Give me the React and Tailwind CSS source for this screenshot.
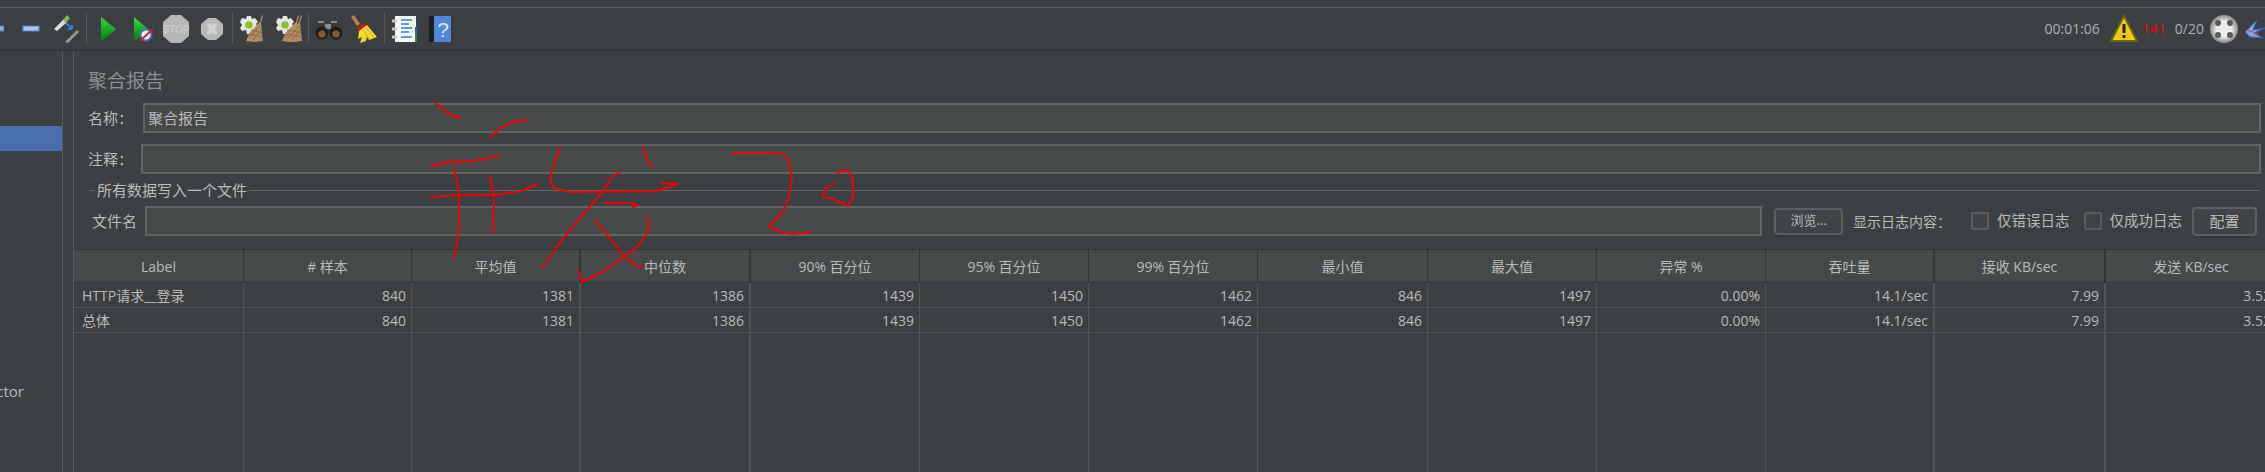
import React from "react";

const strokes = [
  "M435 103L442 108L449 114L460 118",
  "M490 137L502 127L513 122L528 120",
  "M432 166L446 162L473 161L499 156",
  "M454 169L459 190L459 230L454 258",
  "M490 177L494 197L493 233",
  "M431 197L460 195L495 195L522 191L538 184",
  "M560 147L551 173L550 181L554 188L570 192L657 191L678 184L662 183",
  "M643 147L647 160L652 167",
  "M620 172L613 176L600 195L580 218L558 245L542 268",
  "M604 203L630 203L638 205L633 207",
  "M595 221L610 238L623 255L635 265L643 267",
  "M647 218L649 222L648 232L637 247L617 262L600 273L582 282L578 270",
  "M732 153L780 153L788 158L792 177L789 197L783 212L769 226L780 232L793 234L811 232",
  "M837 174L842 170L849 171L853 180L853 197L848 206L833 199L823 197L825 189L835 183",
];

const columns = [
  { w: "w-[170px]", title: "Label", a: "HTTP请求__登录", b: "总体", left: true },
  { w: "w-[168px]", title: "# 样本", a: "840", b: "840" },
  { w: "w-[169px]", title: "平均值", a: "1381", b: "1381", thick: true },
  { w: "w-[170px]", title: "中位数", a: "1386", b: "1386", thick: true },
  { w: "w-[169px]", title: "90% 百分位", a: "1439", b: "1439" },
  { w: "w-[169px]", title: "95% 百分位", a: "1450", b: "1450" },
  { w: "w-[169px]", title: "99% 百分位", a: "1462", b: "1462" },
  { w: "w-[170px]", title: "最小值", a: "846", b: "846" },
  { w: "w-[169px]", title: "最大值", a: "1497", b: "1497" },
  { w: "w-[169px]", title: "异常 %", a: "0.00%", b: "0.00%" },
  { w: "w-[169px]", title: "吞吐量", a: "14.1/sec", b: "14.1/sec", thick: true },
  { w: "w-[171px]", title: "接收 KB/sec", a: "7.99", b: "7.99", thick: true },
  { w: "w-[171px]", title: "发送 KB/sec", a: "3.52", b: "3.52" },
];

function Sep({ className }) {
  return <div className={"w-[1px] h-[31px] shrink-0 bg-[#55585a] " + className} />;
}

function Icon({ w, ml, children }) {
  return (
    <svg width={w} height={30} viewBox={`0 0 ${w} 30`} className={"shrink-0 " + ml}>
      {children}
    </svg>
  );
}

function Gear() {
  return (
    <g>
      <path d="M9 2L13 2L14 5L17 4L20 8L18 10L20 13L17 17L14 16L13 20L9 20L8 16L4 17L2 14L4 11L2 8L4 4L8 5Z" fill="#e6e6e6" />
      <circle cx="11" cy="11" r="3.8" fill="#8fc31f" />
    </g>
  );
}

function Brush({ x = 0 }) {
  return (
    <g transform={`translate(${x} 0)`}>
      <path d="M8 27L12 18L22 8L24 1L25 2L23 9L25 27L16 28Z" fill="#b28d63" />
      <path d="M11 24L22 12M15 26L24 15M11 20L24 23M13 16L24 19" stroke="#8a6a45" strokeWidth="1" />
    </g>
  );
}

function Toolbar() {
  return (
    <div className="h-[43px] flex items-center border-b-2 border-[#343638] shrink-0">
      <Icon w={4} ml="">
        <rect x="-6" y="12" width="10" height="5" fill="#8db4e2" stroke="#4f7fc0" />
      </Icon>
      <Icon w={18} ml="ml-[18px]">
        <rect x="1" y="12" width="16" height="5" fill="#a9c6ea" stroke="#4f83c6" />
      </Icon>
      <Icon w={28} ml="ml-[12px]">
        <path d="M2 15L12 5L15 8L5 17Z" fill="#ddd" />
        <path d="M11 6L15 1L18 4L14 9Z" fill="#8cb15a" />
        <path d="M14 9L20 15M20 15L20 11M20 15L16 15" stroke="#2e7fdc" strokeWidth="2" fill="none" />
        <path d="M13 28L25 16L27 18L16 29Z" fill="#8f9a8a" />
      </Icon>
      <Sep className="ml-[6px]" />
      <Icon w={16} ml="ml-[14px]">
        <defs>
          <linearGradient id="gr" x1="0" y1="0" x2="0" y2="1">
            <stop offset="0" stopColor="#38d838" />
            <stop offset="1" stopColor="#007a10" />
          </linearGradient>
        </defs>
        <path d="M0 3L15 15L0 28Z" fill="url(#gr)" />
      </Icon>
      <Icon w={20} ml="ml-[16px]">
        <path d="M1 3L15 15L1 28Z" fill="url(#gr)" />
        <circle cx="13" cy="21" r="5.5" fill="#f0f0f0" stroke="#3a70b8" strokeWidth="2" />
        <path d="M7 27L20 15" stroke="#d0202a" strokeWidth="2" />
      </Icon>
      <Icon w={28} ml="ml-[9px]">
        <path d="M9 1L19 1L27 8L27 22L19 29L9 29L1 22L1 8Z" fill="#b7b7b7" />
        <text x="14" y="19" textAnchor="middle" fontSize="10" fontWeight="700" fill="#cbcbcb" fontFamily="Liberation Sans, sans-serif">STOP</text>
      </Icon>
      <Icon w={22} ml="ml-[11px]">
        <path d="M7 4L15 4L22 10L22 20L15 26L7 26L0 20L0 10Z" fill="#b9b9b9" />
        <path d="M7 10L15 20M15 10L7 20" stroke="#d2d2d2" strokeWidth="4" />
      </Icon>
      <Sep className="ml-[9px]" />
      <Icon w={27} ml="ml-[5px]">
        <Gear />
        <Brush />
      </Icon>
      <Icon w={28} ml="ml-[9px]">
        <Gear />
        <Brush />
        <Brush x={3} />
      </Icon>
      <Sep className="ml-[6px]" />
      <Icon w={30} ml="ml-[4px]">
        <rect x="4" y="7" width="9" height="9" rx="2" fill="#3a3a3a" />
        <rect x="17" y="7" width="9" height="9" rx="2" fill="#3a3a3a" />
        <path d="M5 8H11M18 8H24" stroke="#a8a8a8" strokeWidth="1.5" />
        <rect x="12" y="10" width="6" height="5" fill="#8a8a8a" />
        <circle cx="9" cy="19" r="6.5" fill="#1e1e1e" />
        <circle cx="23" cy="19" r="6.5" fill="#1e1e1e" />
        <circle cx="9" cy="20" r="3.6" fill="#8a5a30" />
        <circle cx="23" cy="20" r="3.6" fill="#8a5a30" />
      </Icon>
      <Icon w={28} ml="ml-[7px]">
        <path d="M1 3L4 1L10 10L7 12Z" fill="#b8863a" />
        <path d="M7 14L15 9L17 11L9 17Z" fill="#d01818" />
        <path d="M9 17L17 11L27 23L19 26L17 23L16 27L10 29L12 23L8 25Z" fill="#f3d92b" />
        <path d="M13 16L19 25M16 14L24 23" stroke="#c9a916" strokeWidth="1" />
      </Icon>
      <Sep className="ml-[6px]" />
      <Icon w={25} ml="ml-[7px]">
        <rect x="3" y="2" width="21" height="26" fill="#f8f8f8" />
        <rect x="23" y="13" width="2" height="8" fill="#2a6bc0" />
        <rect x="23" y="21" width="2" height="7" fill="#2b8a2b" />
        <path d="M0 7H5M0 15H5M0 23H5" stroke="#ccc" strokeWidth="3" />
        <path d="M9 6H20M9 10H17M9 14H20M9 18H17M9 23H20" stroke="#2f7be0" strokeWidth="1.5" />
      </Icon>
      <Icon w={22} ml="ml-[12px]">
        <rect x="0" y="2" width="6" height="26" fill="#1d2023" />
        <rect x="5" y="2" width="17" height="26" fill="#4f86d8" />
        <text x="14" y="23" textAnchor="middle" fontSize="21" fill="#dbe7f8" fontFamily="Liberation Sans, sans-serif">?</text>
      </Icon>
      <span className="ml-auto text-[14px] text-[#a9b4bf]">00:01:06</span>
      <Icon w={28} ml="ml-[10px]">
        <path d="M14 2L27 27L1 27Z" fill="#f2cc0c" stroke="#6e6518" strokeWidth="2" />
        <rect x="12.5" y="10" width="3" height="9" fill="#222" />
        <rect x="12.5" y="21" width="3" height="3" fill="#222" />
      </Icon>
      <span className="ml-[4px] text-[14px] text-[#f00000]">141</span>
      <span className="ml-[9px] text-[14px] text-[#a9b4bf]">0/20</span>
      <Icon w={28} ml="ml-[6px]">
        <defs>
          <radialGradient id="ball">
            <stop offset="0.55" stopColor="#ececec" />
            <stop offset="1" stopColor="#8a8a8a" />
          </radialGradient>
        </defs>
        <circle cx="14" cy="15" r="14" fill="url(#ball)" />
        <circle cx="8" cy="9" r="3" fill="#5a5a5a" />
        <circle cx="20" cy="9" r="3" fill="#5a5a5a" />
        <circle cx="8" cy="21" r="3" fill="#5a5a5a" />
        <circle cx="20" cy="21" r="3" fill="#5a5a5a" />
      </Icon>
      <Icon w={20} ml="ml-[7px]">
        <path d="M0 18L12 6L8 16L20 14L9 19L18 24L5 23Z" fill="#7fa3de" stroke="#2f5fb0" strokeWidth="1" />
        <path d="M2 16L14 20" stroke="#d04040" strokeWidth="1" />
      </Icon>
    </div>
  );
}

function Field({ className }) {
  return <div className={"h-[30px] min-w-0 border-2 border-[#646464] bg-[#45494a] " + (className || "")} />;
}

function Checkbox({ label, ml }) {
  return (
    <div className={"flex items-center shrink-0 " + ml}>
      <div className="w-[18px] h-[18px] rounded-[3px] border-2 border-[#5a5d5f] bg-[#3f4244]" />
      <span className="ml-[8px] text-[14.5px]">{label}</span>
    </div>
  );
}

function Button({ label, className }) {
  return (
    <div className={"shrink-0 flex items-center justify-center rounded-[4px] border-2 border-[#5c5f61] bg-[#404345] shadow-[0_2px_0_#35383a] " + className}>
      {label}
    </div>
  );
}

function Column({ w, title, a, b, left, thick }) {
  const cell = "h-[25px] px-[5px] flex items-center border-b border-[#505355] " + (left ? "pl-[8px]" : "justify-end");
  return (
    <div className={"shrink-0 flex flex-col border-[#505355] " + w + " " + (thick ? "border-r-2" : "border-r")}>
      <div
        className={
          "relative h-[34px] flex items-center justify-center bg-[#45494a] border-t border-b border-[#323436] " +
          (thick ? "-mr-[2px] border-r-2" : "-mr-[1px] border-r")
        }
      >
        {title}
      </div>
      <div className={cell}>{a}</div>
      <div className={cell}>{b}</div>
    </div>
  );
}

export default function App() {
  return (
    <div
      className="relative w-[2265px] h-[472px] overflow-hidden bg-[#3c3f41] text-[#bbbbbb] text-[14px] flex flex-col"
      style={{ fontFamily: '"Open Sans","Noto Sans CJK SC",sans-serif' }}
    >
      <div className="h-[8px] shrink-0 border-b border-[#58595b]" />
      <Toolbar />
      <div className="flex flex-1 min-h-0">
        <div className="w-[63px] shrink-0 border-r border-[#58595b] flex flex-col">
          <div className="mt-[75px] h-[25px] bg-[#4b6eaf]" />
          <div className="mt-[228px] w-[24px] h-[24px] overflow-hidden flex justify-end items-center whitespace-nowrap text-[15px]">Inspector</div>
        </div>
        <div className="w-[11px] shrink-0 border-r border-[#58595b]" />
        <div className="flex-1 min-w-0 flex flex-col">
          <div className="ml-[14px] mt-[17px] h-[26px] flex items-center text-[19px] text-[#8c9092]">聚合报告</div>
          <div className="mt-[9px] ml-[14px] mr-[4px] flex items-center text-[15px]">
            <span className="w-[55px] shrink-0">名称：</span>
            <div className="flex-1 h-[30px] min-w-0 border-2 border-[#646464] bg-[#45494a] px-[3px] flex items-center">聚合报告</div>
          </div>
          <div className="mt-[11px] ml-[14px] mr-[4px] flex items-center text-[15px]">
            <span className="w-[53px] shrink-0">注释：</span>
            <Field className="flex-1" />
          </div>
          <div className="mt-[6px] ml-[15px] mr-[5px] h-[20px] flex items-center text-[15px]">
            <div className="w-[6px] h-[1px] bg-[#646464]" />
            <span className="mx-[2px] shrink-0">所有数据写入一个文件</span>
            <div className="flex-1 h-[1px] bg-[#646464]" />
          </div>
          <div className="mt-[6px] ml-[18px] mr-[8px] flex items-center text-[15px] whitespace-nowrap">
            <span className="w-[53px] shrink-0">文件名</span>
            <Field className="flex-1" />
            <Button label="浏览..." className="ml-[12px] w-[69px] h-[27px] text-[13px]" />
            <span className="ml-[10px] shrink-0 text-[14px]">显示日志内容：</span>
            <Checkbox label="仅错误日志" ml="ml-[20px]" />
            <Checkbox label="仅成功日志" ml="ml-[14px]" />
            <Button label="配置" className="ml-[10px] w-[65px] h-[29px]" />
          </div>
          <div className="mt-[13px] flex flex-1 min-h-0 text-[14px] whitespace-nowrap">
            {columns.map((c) => (
              <Column key={c.title} {...c} />
            ))}
          </div>
        </div>
      </div>
      <svg className="absolute left-0 top-0 pointer-events-none" width="2265" height="472" viewBox="0 0 2265 472" fill="none">
        {strokes.map((d) => (
          <path key={d} d={d} stroke="#f00000" strokeWidth="2" strokeLinejoin="round" strokeLinecap="round" />
        ))}
      </svg>
    </div>
  );
}
